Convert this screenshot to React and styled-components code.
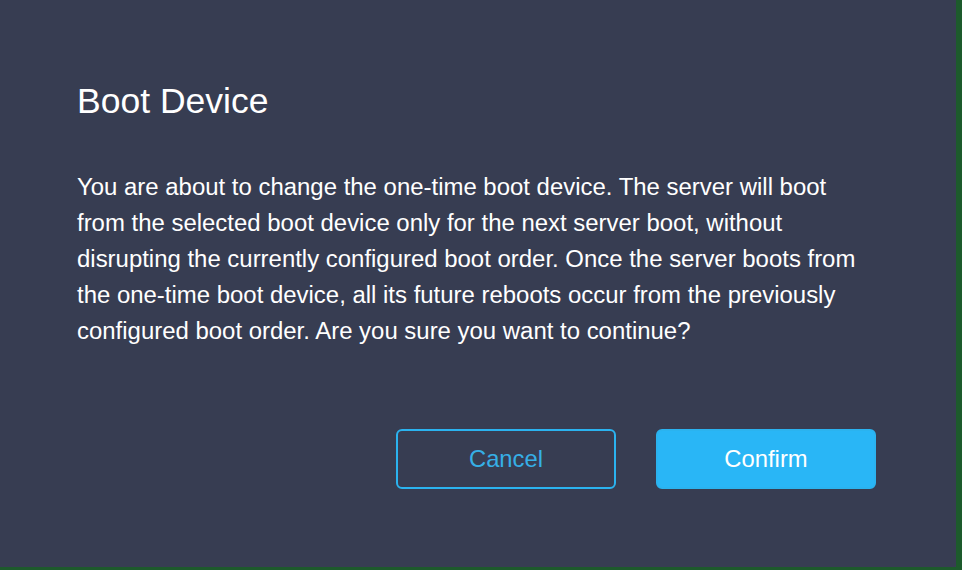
import React from 'react';
import styled, { createGlobalStyle } from 'styled-components';

const GlobalStyle = createGlobalStyle`
    html, body {
      margin: 0;
      padding: 0;
      background: #1d5a2c;
      font-family: 'Liberation Sans', Arial, sans-serif;
    }
`;

const Page = styled.div`
    width: 962px;
    height: 570px;
    background: #1d5a2c;
`;

const Dialog = styled.div`
    width: 956px;
    height: 567px;
    box-sizing: border-box;
    background: #373d52;
    padding: 80px 80px 78px 77px;
    display: flex;
    flex-direction: column;
`;

const Title = styled.h2`
    margin: 0;
    font-weight: normal;
    font-size: 35.5px;
    line-height: 42px;
    color: #ffffff;
`;

const Message = styled.p`
    margin: 47px 0 0 0;
    font-size: 23.95px;
    line-height: 36px;
    color: #ffffff;
    white-space: nowrap;
`;

const Actions = styled.div`
    margin-top: auto;
    display: flex;
    justify-content: flex-end;
    gap: 40px;
`;

const Button = styled.button`
    width: 220px;
    height: 60px;
    box-sizing: border-box;
    border-radius: 6px;
    font-family: 'Liberation Sans', Arial, sans-serif;
    font-size: 23.8px;
    cursor: pointer;
    border: 2px solid #2bb3ef;
    background: ${(p) => (p.primary ? '#29b6f6' : 'transparent')};
    color: ${(p) => (p.primary ? '#ffffff' : '#36afe6')};
`;

export default function App() {
    return (
        <Page>
            <GlobalStyle />
            <Dialog>
                <Title>Boot Device</Title>
                <Message>
                    You are about to change the one-time boot device. The server will boot<br />
                    from the selected boot device only for the next server boot, without<br />
                    disrupting the currently configured boot order. Once the server boots from<br />
                    the one-time boot device, all its future reboots occur from the previously<br />
                    configured boot order. Are you sure you want to continue?
                </Message>
                <Actions>
                    <Button>Cancel</Button>
                    <Button primary>Confirm</Button>
                </Actions>
            </Dialog>
        </Page>
    );
}
